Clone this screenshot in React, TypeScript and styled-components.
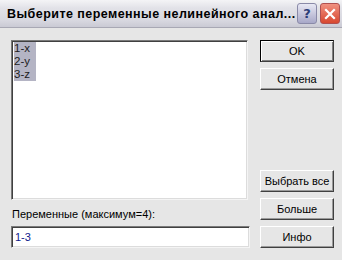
import React from 'react';
import styled, { createGlobalStyle } from 'styled-components';

const GlobalStyle = createGlobalStyle`
  html, body {
    margin: 0;
    padding: 0;
    background: #e6e6e6;
  }
  body {
    font-family: "Liberation Sans", Arial, sans-serif;
    font-size: 11px;
  }
`;

const variables = ['1-x', '2-y', '3-z'];

const App: React.FC = () => (
  <>
    <GlobalStyle />
    <Window>
      <TitleBar>
        <Title>Выберите переменные нелинейного анал...</Title>
        <HelpButton>?</HelpButton>
        <CloseButton>
          <svg width="12" height="12" viewBox="0 0 12 12">
            <path d="M2 2 L10 10 M10 2 L2 10" stroke="#fff" strokeWidth="2.2" strokeLinecap="square" />
          </svg>
        </CloseButton>
      </TitleBar>
      <Body>
        <LeftColumn>
          <ListBox>
            {variables.map(v => (
              <ListItem key={v}><span>{v}</span></ListItem>
            ))}
          </ListBox>
          <Label>Переменные (максимум=4):</Label>
          <Input>1-3</Input>
        </LeftColumn>
        <RightColumn>
          <ButtonGroup>
            <Button $default>OK</Button>
            <Button>Отмена</Button>
          </ButtonGroup>
          <ButtonGroup>
            <Button>Выбрать все</Button>
            <Button>Больше</Button>
            <Button>Инфо</Button>
          </ButtonGroup>
        </RightColumn>
      </Body>
    </Window>
  </>
);

const Window = styled.div`
  width: 342px;
  height: 260px;
  display: flex;
  flex-direction: column;
  background: #e6e6e6;
  overflow: hidden;
`;

const TitleBar = styled.div`
  height: 28px;
  box-sizing: border-box;
  display: flex;
  align-items: center;
  padding: 0 2px 0 7px;
  gap: 3px;
  background: linear-gradient(#f4f4f6 0%, #e2e2e8 30%, #d8d8e0 75%, #cacad4 100%);
  border-bottom: 1px solid #a8a8b4;
`;

const Title = styled.div`
  flex: 1;
  min-width: 0;
  font-family: "Liberation Sans", Arial, sans-serif;
  font-weight: bold;
  font-size: 12.5px;
  letter-spacing: 0.45px;
  color: #000;
  white-space: nowrap;
`;

const CaptionButton = styled.div`
  flex: none;
  width: 20px;
  height: 21px;
  box-sizing: border-box;
  border-radius: 3px;
  display: flex;
  align-items: center;
  justify-content: center;
`;

const HelpButton = styled(CaptionButton)`
  border: 1px solid #8a8aa8;
  background: linear-gradient(#e8e8f4, #a8a8c8);
  color: #2c3c78;
  font-family: "DejaVu Sans", sans-serif;
  font-weight: bold;
  font-size: 13px;
`;

const CloseButton = styled(CaptionButton)`
  border: 1px solid #b05050;
  background: linear-gradient(#f09080, #d84830);
`;

const Body = styled.div`
  flex: 1;
  display: flex;
  padding: 12px 10px 0 11px;
  gap: 11px;
`;

const LeftColumn = styled.div`
  width: 238px;
  display: flex;
  flex-direction: column;
`;

const Sunken = styled.div`
  box-sizing: border-box;
  background: #fff;
  border-top: 1px solid #7a7a7a;
  border-left: 1px solid #7a7a7a;
  border-right: 1px solid #f4f4f4;
  border-bottom: 1px solid #f4f4f4;
  box-shadow: inset 1px 1px 0 #404040, inset -1px -1px 0 #dcdcdc;
`;

const ListBox = styled(Sunken)`
  width: 237px;
  height: 160px;
  padding: 1px 2px;
`;

const ListItem = styled.div`
  height: 13px;
  line-height: 13px;
  font-size: 11.5px;

  span {
    display: inline-block;
    background: #b4b4c4;
    padding-right: 6px;
    color: #202020;
  }
`;

const Label = styled.div`
  margin-top: 7px;
  height: 14px;
  line-height: 14px;
  padding-left: 1px;
  color: #000;
`;

const Input = styled(Sunken)`
  margin-top: 5px;
  width: 239px;
  height: 22px;
  padding: 3px 3px;
  line-height: 14px;
  color: #10208c;
`;

const RightColumn = styled.div`
  display: flex;
  flex-direction: column;
  justify-content: space-between;
  padding-bottom: 12px;
`;

const ButtonGroup = styled.div`
  display: flex;
  flex-direction: column;
  gap: 6px;
`;

const Button = styled.div<{ $default?: boolean }>`
  width: 74px;
  height: 22px;
  box-sizing: border-box;
  display: flex;
  align-items: center;
  justify-content: center;
  color: #000;
  background: #e6e6e6;
  border-top: 1px solid ${p => (p.$default ? '#000' : '#fff')};
  border-left: 1px solid ${p => (p.$default ? '#000' : '#fff')};
  border-right: 1px solid #404040;
  border-bottom: 1px solid #404040;
  box-shadow: ${p => (p.$default
    ? 'inset 1px 1px 0 #fff, inset -1px -1px 0 #808080'
    : 'inset -1px -1px 0 #9a9a9a')};
`;

export default App;
